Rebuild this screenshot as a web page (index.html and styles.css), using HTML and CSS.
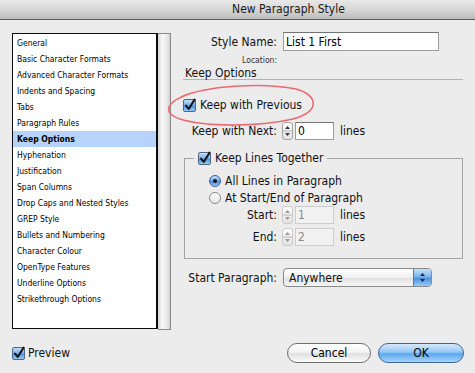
FILE: index.html
```html
<!DOCTYPE html>
<html lang="en">
<head>
    <meta charset="UTF-8">
    <title>New Paragraph Style</title>
    <meta name="viewport" content="width=device-width, initial-scale=1">
    <link rel="stylesheet" href="styles.css">
</head>
<body>
<div class="window">
    <div class="titlebar">New Paragraph Style</div>

    <div class="content">
        <!-- Category list -->
        <div class="list-panel">
            <ul class="category-list">
                <li>General</li>
                <li>Basic Character Formats</li>
                <li>Advanced Character Formats</li>
                <li>Indents and Spacing</li>
                <li>Tabs</li>
                <li>Paragraph Rules</li>
                <li class="selected">Keep Options</li>
                <li>Hyphenation</li>
                <li>Justification</li>
                <li>Span Columns</li>
                <li>Drop Caps and Nested Styles</li>
                <li>GREP Style</li>
                <li>Bullets and Numbering</li>
                <li>Character Colour</li>
                <li>OpenType Features</li>
                <li>Underline Options</li>
                <li>Strikethrough Options</li>
            </ul>
            <div class="list-strip"></div>
        </div>

        <!-- Options panel -->
        <div class="options">
            <div class="field-row name-row">
                <span class="field-label">Style Name:</span>
                <input class="text-input name-input" type="text" value="List 1 First">
            </div>
            <div class="location-row"><span class="field-label small-label">Location:</span></div>
            <div class="section-title">Keep Options</div>

            <div class="check-row keep-prev">
                <span class="checkbox checked"><svg width="13" height="13" viewBox="0 0 13 13"><path d="M3 6.6 L5.7 10 L11.6 0.6" /></svg></span>
                <span>Keep with Previous</span>
            </div>

            <div class="field-row next-row">
                <span class="field-label">Keep with Next:</span>
                <span class="stepper"><svg width="11" height="18" viewBox="0 0 11 18"><path d="M3 7 L5.5 4 L8 7 Z M3 11 L5.5 14 L8 11 Z" /><line x1="1" y1="9" x2="10" y2="9" /></svg></span>
                <input class="num-input" type="text" value="0">
                <span class="unit">lines</span>
            </div>

            <fieldset class="group">
                <legend class="group-legend">
                    <span class="checkbox checked"><svg width="13" height="13" viewBox="0 0 13 13"><path d="M3 6.6 L5.7 10 L11.6 0.6" /></svg></span>
                    <span>Keep Lines Together</span>
                </legend>
                <div class="group-body">
                    <div class="radio-row"><span class="radio on"></span><span>All Lines in Paragraph</span></div>
                    <div class="radio-row"><span class="radio"></span><span>At Start/End of Paragraph</span></div>
                    <div class="field-row sub-row">
                        <span class="field-label inner-label">Start:</span>
                        <span class="stepper disabled"><svg width="11" height="18" viewBox="0 0 11 18"><path d="M3 7 L5.5 4 L8 7 Z M3 11 L5.5 14 L8 11 Z" /><line x1="1" y1="9" x2="10" y2="9" /></svg></span>
                        <input class="num-input" type="text" value="1" disabled>
                        <span class="unit">lines</span>
                    </div>
                    <div class="field-row sub-row end-row">
                        <span class="field-label inner-label">End:</span>
                        <span class="stepper disabled"><svg width="11" height="18" viewBox="0 0 11 18"><path d="M3 7 L5.5 4 L8 7 Z M3 11 L5.5 14 L8 11 Z" /><line x1="1" y1="9" x2="10" y2="9" /></svg></span>
                        <input class="num-input" type="text" value="2" disabled>
                        <span class="unit">lines</span>
                    </div>
                </div>
            </fieldset>

            <div class="field-row start-row">
                <span class="field-label">Start Paragraph:</span>
                <div class="popup">
                    <span class="popup-value">Anywhere</span>
                    <span class="popup-arrows"><svg width="17" height="17" viewBox="0 0 17 17"><path d="M6 7 L8.5 4 L11 7 Z M6 10 L8.5 13 L11 10 Z" /></svg></span>
                </div>
            </div>
        </div>
    </div>

    <!-- Footer -->
    <div class="footer">
        <div class="check-row preview">
            <span class="checkbox checked"><svg width="13" height="13" viewBox="0 0 13 13"><path d="M3 6.6 L5.7 10 L11.6 0.6" /></svg></span>
            <span>Preview</span>
        </div>
        <div class="buttons">
            <button class="btn">Cancel</button>
            <button class="btn btn-default">OK</button>
        </div>
    </div>

    <!-- Hand-drawn highlight round "Keep with Previous" -->
    <svg class="annotation" width="475" height="373" viewBox="0 0 475 373">
        <path d="M181 97 C205 86 262 82 296 89 C318 95 321 111 293 119 C258 127 206 127 180 119 C163 113 164 102 192 93" />
    </svg>
</div>
</body>
</html>
```

FILE: styles.css
```css
* { box-sizing: border-box; }
body { margin: 0; background: #ececec; font-family: "DejaVu Sans Condensed", "DejaVu Sans", sans-serif; font-stretch: condensed; font-size: 12px; color: #111; }
.window { position: relative; width: 475px; height: 373px; background: #ececec; overflow: hidden; }

.titlebar { height: 20px; line-height: 19px; padding-left: 102px; text-align: center; font-size: 12px; color: #1a1a1a; background: linear-gradient(#e9e9e9, #d6d6d6 50%, #bdbdbd); border-bottom: 1px solid #5c5c5c; }

.content { display: grid; grid-template-columns: 159px 280px; column-gap: 12px; padding: 12px 0 0 12px; }

/* category list */
.list-panel { display: flex; height: 296px; margin-top: 1px; }
.category-list { flex: 1; list-style: none; margin: 0; padding: 1px 0 0; background: #fff; border: 1px solid #0d0d0d; border-right-width: 2px; }
.category-list li { height: 16px; line-height: 16px; padding-left: 4px; font-size: 8.5px; color: #000; white-space: nowrap; }
.category-list li.selected { background: #b6d4fb; font-weight: bold; }
.list-strip { width: 13px; background: linear-gradient(to right, #d4d4d4, #f9f9f9 35%, #e6e6e6 80%, #cfcfcf); border: 1px solid #8a8a8a; border-left: none; margin-bottom: -1px; }

/* options */
.field-row { display: flex; align-items: center; }
.field-label { width: 94px; flex: none; text-align: right; white-space: nowrap; }
.inner-label { width: 92px; }
.name-row { height: 19px; }
.name-row .field-label { margin-right: 6px; }
.text-input { font: inherit; font-stretch: condensed; height: 19px; padding: 0 2px; border: 1px solid #9c9c9c; border-top-color: #737373; background: #fff; color: #000; }
.name-input { width: 156px; }
.location-row { height: 17px; line-height: 17px; }
.small-label { display: inline-block; font-size: 8.5px; color: #333; }
.section-title { height: 12px; line-height: 11px; padding-left: 2px; border-bottom: 1px solid #b3b3b3; }

.check-row { display: flex; align-items: center; gap: 4px; }
.keep-prev { height: 16px; margin-top: 17px; }
.checkbox { width: 13px; height: 13px; flex: none; border: 1px solid #4f6686; border-radius: 2px; background: #fff; }
.checkbox.checked { background: linear-gradient(#c4def9, #7fb4ec 45%, #4e92dd 55%, #9acbf5); }
.checkbox svg { display: block; margin: -1px 0 0 -1px; overflow: visible; }
.checkbox path { fill: none; stroke: #141414; stroke-width: 2; stroke-linecap: round; stroke-linejoin: round; }

.next-row { height: 18px; margin-top: 9px; }
.stepper { width: 11px; height: 18px; margin-left: 5px; flex: none; border: 1px solid #a3a3a3; border-radius: 3px; background: linear-gradient(#fdfdfd, #e2e2e2); }
.stepper svg { display: block; margin: -1px 0 0 -1px; }
.stepper path { fill: #3a3a3a; }
.stepper line { stroke: #b5b5b5; stroke-width: 1; }
.stepper.disabled { border-color: #cbcbcb; }
.stepper.disabled path { fill: #9a9a9a; }
.num-input { font: inherit; font-stretch: condensed; width: 39px; height: 18px; margin-left: 2px; padding: 0 2px; border: 1px solid #9c9c9c; border-top-color: #767676; background: #fff; color: #000; }
.num-input:disabled { background: #f1f1f1; border-color: #cdcdcd; color: #8a8a8a; }
.unit { margin-left: 6px; }

/* Keep Lines Together group */
.group { margin: 11px 0 0 1px; padding: 0; width: 279px; border: 1px solid #a4a4a4; min-width: 0; }
.group-legend { display: flex; align-items: center; gap: 4px; height: 14px; margin-left: 9px; padding: 0 4px; }
.group-body { padding: 7px 0 12px; }
.radio-row { display: flex; align-items: center; gap: 4px; height: 17px; padding-left: 24px; }
.radio { width: 12px; height: 12px; border-radius: 50%; border: 1px solid #8b8b8b; background: linear-gradient(#ffffff, #e4e4e4); flex: none; display: flex; align-items: center; justify-content: center; }
.radio.on { border-color: #3f6396; background: linear-gradient(#c4def9, #6fa9e8 50%, #4a8fdc 55%, #9acbf5); }
.radio.on::after { content: ""; width: 4px; height: 4px; border-radius: 50%; background: #161616; }
.sub-row { height: 18px; }
.end-row { margin-top: 4px; }

.start-row { height: 19px; margin-top: 9px; }
.popup { display: flex; align-items: center; width: 149px; height: 19px; margin-left: 6px; border: 1px solid #8a8a8a; border-radius: 4px; background: linear-gradient(#ffffff, #f0f0f0 50%, #e2e2e2 55%, #f5f5f5); overflow: hidden; }
.popup-value { flex: 1; padding-left: 5px; }
.popup-arrows { width: 18px; height: 17px; background: linear-gradient(#c6e0fa, #7db5ee 45%, #4d92de 55%, #98caf6); border-left: 1px solid #5878a6; }
.popup-arrows svg { display: block; }
.popup-arrows path { fill: #1d2a3d; }

/* footer */
.footer { display: flex; align-items: center; justify-content: space-between; height: 20px; margin-top: 14px; padding: 0 11px 0 12px; }
.preview { gap: 3px; }
.buttons { display: flex; gap: 7px; }
.btn { font: inherit; font-stretch: condensed; width: 84px; height: 20px; padding: 0; border: 1px solid #6f6f6f; border-radius: 10px; background: linear-gradient(#ffffff, #f3f3f3 45%, #e0e0e0 55%, #fbfbfb); color: #000; }
.btn-default { width: 86px; border-color: #3f6497; background: linear-gradient(#d6eafd, #95c7f4 45%, #5ca7ee 55%, #a6d6fb); }

.annotation { position: absolute; left: 0; top: 0; pointer-events: none; }
.annotation path { fill: none; stroke: #ea6a70; stroke-width: 1.6; stroke-linecap: round; }
```
